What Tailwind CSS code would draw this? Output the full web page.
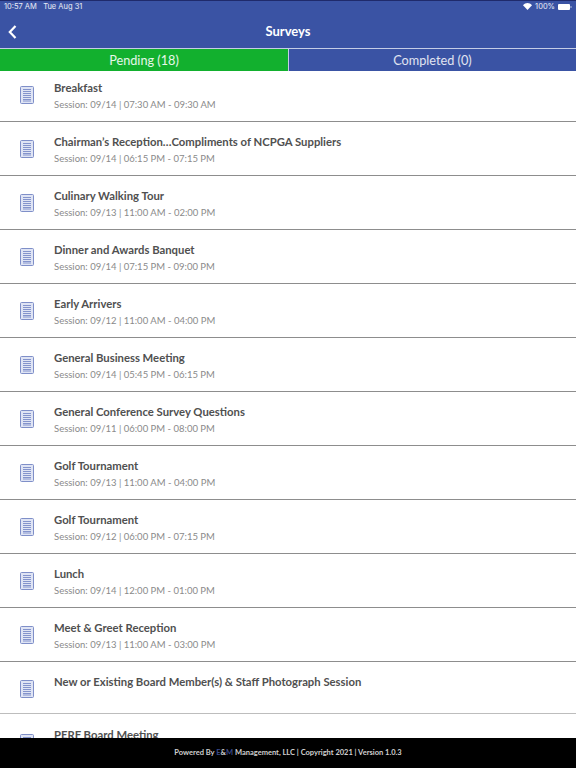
<!DOCTYPE html>
<html lang="en">
<head>
  <meta charset="UTF-8" />
  <meta name="viewport" content="width=device-width, initial-scale=1" />
  <title>Surveys</title>
  <script src="https://cdn.jsdelivr.net/npm/@tailwindcss/browser@4"></script>
</head>
<body class="bg-white font-['Lato',sans-serif] text-[#505050]">
<div class="w-[576px] h-[768px] overflow-hidden flex flex-col">

  <!-- Header -->
  <header class="bg-[#3a53a4] text-white h-[48px] shrink-0 border-t border-[#1f2a6b] relative">
    <div class="flex justify-between items-center h-[11px] px-[4px] font-['Inter',sans-serif] text-[7.5px] text-white/90">
      <span>10:57 AM&nbsp;&nbsp; Tue Aug 31</span>
      <span class="flex items-center gap-[3px]">
        <svg width="9" height="7" viewBox="0 0 18 14" fill="white"><path d="M9 14 L0 4.5 C5 -1.5 13 -1.5 18 4.5 Z"/></svg>
        100%
        <svg width="14" height="6" viewBox="0 0 14 6"><rect x="0" y="0" width="12" height="6" rx="1" fill="white"/><rect x="12.5" y="2" width="1" height="2" fill="white" opacity="0.6"/></svg>
      </span>
    </div>
    <div class="flex items-center justify-center h-[36px] pt-[4px] relative">
      <svg class="absolute left-[8px] top-[13px]" width="9" height="14" viewBox="0 0 9 14" fill="none" stroke="white" stroke-width="2.2"><path d="M7.5 1 L1.8 7 L7.5 13"/></svg>
      <h1 class="text-[13px] font-bold">Surveys</h1>
    </div>
  </header>

  <!-- Tabs -->
  <div class="flex h-[23px] shrink-0 border-t border-[#c5cde6] text-[12.7px]">
    <div class="w-[288px] pt-[1px] bg-[#12b02e] text-white/90 flex items-center justify-center">Pending (18)</div>
    <div class="w-[288px] pt-[1px] bg-[#3a53a4] border-l border-[#c5cde6] text-white/85 flex items-center justify-center">Completed (0)</div>
  </div>

  <!-- Survey list -->
  <main class="flex-1 overflow-hidden">
    <div class="flex h-[51px] border-b border-[#8d8d8d] pl-[20px]">
      <svg class="mt-[15px]" width="14" height="18" viewBox="0 0 14 18"><rect x="0.5" y="0.5" width="13" height="17" rx="1" fill="#dfe4f4" stroke="#7f8fc8"/><path d="M3 3.5h8M3 5.5h8M3 7.5h8M3 9.5h8M3 11.5h8M3 13.5h8M3 15h8" stroke="#8494cc"/></svg>
      <div class="ml-[20px] pt-[9px]">
        <p class="text-[11.3px] leading-[15px] font-bold">Breakfast</p>
        <p class="text-[9.5px] leading-[14px] mt-[3px] text-[#8a8a8a]">Session: 09/14 | 07:30 AM - 09:30 AM</p>
      </div>
    </div>
    <div class="flex h-[54px] border-b border-[#8d8d8d] pl-[20px]">
      <svg class="mt-[18px]" width="14" height="18" viewBox="0 0 14 18"><rect x="0.5" y="0.5" width="13" height="17" rx="1" fill="#dfe4f4" stroke="#7f8fc8"/><path d="M3 3.5h8M3 5.5h8M3 7.5h8M3 9.5h8M3 11.5h8M3 13.5h8M3 15h8" stroke="#8494cc"/></svg>
      <div class="ml-[20px] pt-[12px]">
        <p class="text-[11.3px] leading-[15px] font-bold">Chairman’s Reception…Compliments of NCPGA Suppliers</p>
        <p class="text-[9.5px] leading-[14px] mt-[3px] text-[#8a8a8a]">Session: 09/14 | 06:15 PM - 07:15 PM</p>
      </div>
    </div>
    <div class="flex h-[54px] border-b border-[#8d8d8d] pl-[20px]">
      <svg class="mt-[18px]" width="14" height="18" viewBox="0 0 14 18"><rect x="0.5" y="0.5" width="13" height="17" rx="1" fill="#dfe4f4" stroke="#7f8fc8"/><path d="M3 3.5h8M3 5.5h8M3 7.5h8M3 9.5h8M3 11.5h8M3 13.5h8M3 15h8" stroke="#8494cc"/></svg>
      <div class="ml-[20px] pt-[12px]">
        <p class="text-[11.3px] leading-[15px] font-bold">Culinary Walking Tour</p>
        <p class="text-[9.5px] leading-[14px] mt-[3px] text-[#8a8a8a]">Session: 09/13 | 11:00 AM - 02:00 PM</p>
      </div>
    </div>
    <div class="flex h-[54px] border-b border-[#8d8d8d] pl-[20px]">
      <svg class="mt-[18px]" width="14" height="18" viewBox="0 0 14 18"><rect x="0.5" y="0.5" width="13" height="17" rx="1" fill="#dfe4f4" stroke="#7f8fc8"/><path d="M3 3.5h8M3 5.5h8M3 7.5h8M3 9.5h8M3 11.5h8M3 13.5h8M3 15h8" stroke="#8494cc"/></svg>
      <div class="ml-[20px] pt-[12px]">
        <p class="text-[11.3px] leading-[15px] font-bold">Dinner and Awards Banquet</p>
        <p class="text-[9.5px] leading-[14px] mt-[3px] text-[#8a8a8a]">Session: 09/14 | 07:15 PM - 09:00 PM</p>
      </div>
    </div>
    <div class="flex h-[54px] border-b border-[#8d8d8d] pl-[20px]">
      <svg class="mt-[18px]" width="14" height="18" viewBox="0 0 14 18"><rect x="0.5" y="0.5" width="13" height="17" rx="1" fill="#dfe4f4" stroke="#7f8fc8"/><path d="M3 3.5h8M3 5.5h8M3 7.5h8M3 9.5h8M3 11.5h8M3 13.5h8M3 15h8" stroke="#8494cc"/></svg>
      <div class="ml-[20px] pt-[12px]">
        <p class="text-[11.3px] leading-[15px] font-bold">Early Arrivers</p>
        <p class="text-[9.5px] leading-[14px] mt-[3px] text-[#8a8a8a]">Session: 09/12 | 11:00 AM - 04:00 PM</p>
      </div>
    </div>
    <div class="flex h-[54px] border-b border-[#8d8d8d] pl-[20px]">
      <svg class="mt-[18px]" width="14" height="18" viewBox="0 0 14 18"><rect x="0.5" y="0.5" width="13" height="17" rx="1" fill="#dfe4f4" stroke="#7f8fc8"/><path d="M3 3.5h8M3 5.5h8M3 7.5h8M3 9.5h8M3 11.5h8M3 13.5h8M3 15h8" stroke="#8494cc"/></svg>
      <div class="ml-[20px] pt-[12px]">
        <p class="text-[11.3px] leading-[15px] font-bold">General Business Meeting</p>
        <p class="text-[9.5px] leading-[14px] mt-[3px] text-[#8a8a8a]">Session: 09/14 | 05:45 PM - 06:15 PM</p>
      </div>
    </div>
    <div class="flex h-[54px] border-b border-[#8d8d8d] pl-[20px]">
      <svg class="mt-[18px]" width="14" height="18" viewBox="0 0 14 18"><rect x="0.5" y="0.5" width="13" height="17" rx="1" fill="#dfe4f4" stroke="#7f8fc8"/><path d="M3 3.5h8M3 5.5h8M3 7.5h8M3 9.5h8M3 11.5h8M3 13.5h8M3 15h8" stroke="#8494cc"/></svg>
      <div class="ml-[20px] pt-[12px]">
        <p class="text-[11.3px] leading-[15px] font-bold">General Conference Survey Questions</p>
        <p class="text-[9.5px] leading-[14px] mt-[3px] text-[#8a8a8a]">Session: 09/11 | 06:00 PM - 08:00 PM</p>
      </div>
    </div>
    <div class="flex h-[54px] border-b border-[#8d8d8d] pl-[20px]">
      <svg class="mt-[18px]" width="14" height="18" viewBox="0 0 14 18"><rect x="0.5" y="0.5" width="13" height="17" rx="1" fill="#dfe4f4" stroke="#7f8fc8"/><path d="M3 3.5h8M3 5.5h8M3 7.5h8M3 9.5h8M3 11.5h8M3 13.5h8M3 15h8" stroke="#8494cc"/></svg>
      <div class="ml-[20px] pt-[12px]">
        <p class="text-[11.3px] leading-[15px] font-bold">Golf Tournament</p>
        <p class="text-[9.5px] leading-[14px] mt-[3px] text-[#8a8a8a]">Session: 09/13 | 11:00 AM - 04:00 PM</p>
      </div>
    </div>
    <div class="flex h-[54px] border-b border-[#8d8d8d] pl-[20px]">
      <svg class="mt-[18px]" width="14" height="18" viewBox="0 0 14 18"><rect x="0.5" y="0.5" width="13" height="17" rx="1" fill="#dfe4f4" stroke="#7f8fc8"/><path d="M3 3.5h8M3 5.5h8M3 7.5h8M3 9.5h8M3 11.5h8M3 13.5h8M3 15h8" stroke="#8494cc"/></svg>
      <div class="ml-[20px] pt-[12px]">
        <p class="text-[11.3px] leading-[15px] font-bold">Golf Tournament</p>
        <p class="text-[9.5px] leading-[14px] mt-[3px] text-[#8a8a8a]">Session: 09/12 | 06:00 PM - 07:15 PM</p>
      </div>
    </div>
    <div class="flex h-[54px] border-b border-[#8d8d8d] pl-[20px]">
      <svg class="mt-[18px]" width="14" height="18" viewBox="0 0 14 18"><rect x="0.5" y="0.5" width="13" height="17" rx="1" fill="#dfe4f4" stroke="#7f8fc8"/><path d="M3 3.5h8M3 5.5h8M3 7.5h8M3 9.5h8M3 11.5h8M3 13.5h8M3 15h8" stroke="#8494cc"/></svg>
      <div class="ml-[20px] pt-[12px]">
        <p class="text-[11.3px] leading-[15px] font-bold">Lunch</p>
        <p class="text-[9.5px] leading-[14px] mt-[3px] text-[#8a8a8a]">Session: 09/14 | 12:00 PM - 01:00 PM</p>
      </div>
    </div>
    <div class="flex h-[54px] border-b border-[#8d8d8d] pl-[20px]">
      <svg class="mt-[18px]" width="14" height="18" viewBox="0 0 14 18"><rect x="0.5" y="0.5" width="13" height="17" rx="1" fill="#dfe4f4" stroke="#7f8fc8"/><path d="M3 3.5h8M3 5.5h8M3 7.5h8M3 9.5h8M3 11.5h8M3 13.5h8M3 15h8" stroke="#8494cc"/></svg>
      <div class="ml-[20px] pt-[12px]">
        <p class="text-[11.3px] leading-[15px] font-bold">Meet &amp; Greet Reception</p>
        <p class="text-[9.5px] leading-[14px] mt-[3px] text-[#8a8a8a]">Session: 09/13 | 11:00 AM - 03:00 PM</p>
      </div>
    </div>
    <div class="flex h-[52px] border-b border-[#bdbdbd] pl-[20px]">
      <svg class="mt-[18px]" width="14" height="18" viewBox="0 0 14 18"><rect x="0.5" y="0.5" width="13" height="17" rx="1" fill="#dfe4f4" stroke="#7f8fc8"/><path d="M3 3.5h8M3 5.5h8M3 7.5h8M3 9.5h8M3 11.5h8M3 13.5h8M3 15h8" stroke="#8494cc"/></svg>
      <div class="ml-[20px] pt-[12px]">
        <p class="text-[11.3px] leading-[15px] font-bold">New or Existing Board Member(s) &amp; Staff Photograph Session</p>
      </div>
    </div>
    <div class="flex h-[54px] pl-[20px]">
      <svg class="mt-[20px]" width="14" height="18" viewBox="0 0 14 18"><rect x="0.5" y="0.5" width="13" height="17" rx="1" fill="#dfe4f4" stroke="#7f8fc8"/><path d="M3 3.5h8M3 5.5h8M3 7.5h8M3 9.5h8M3 11.5h8M3 13.5h8M3 15h8" stroke="#8494cc"/></svg>
      <div class="ml-[20px] pt-[13px]">
        <p class="text-[11.3px] leading-[15px] font-bold">PERF Board Meeting</p>
      </div>
    </div>
  </main>

  <!-- Footer -->
  <footer class="bg-black h-[30px] shrink-0 flex items-center justify-center text-[7.5px] font-bold text-[#d0d0d0]">
    <span>Powered By <span class="text-[#3a4a8a]">E</span>&amp;<span class="text-[#3a4a8a]">M</span> Management, LLC | Copyright 2021 | Version 1.0.3</span>
  </footer>
</div>
</body>
</html>
